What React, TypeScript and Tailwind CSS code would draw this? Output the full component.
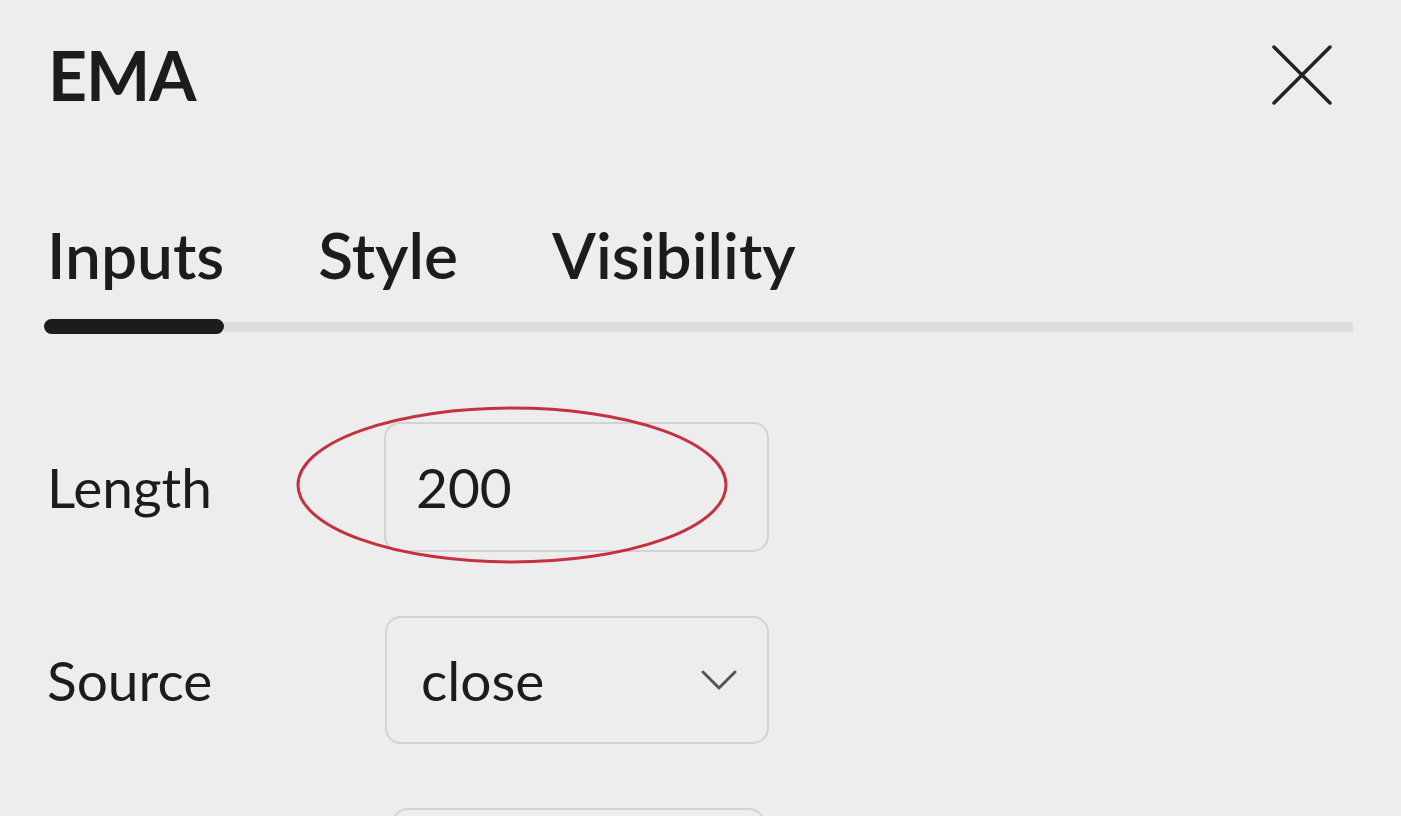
function Chevron() {
  return (
    <svg width="36" height="22" viewBox="0 0 36 22" fill="none">
      <path d="M2 3 L18 19 L34 3" stroke="#555" strokeWidth="3" strokeLinecap="round" strokeLinejoin="round" />
    </svg>
  );
}

function CloseIcon() {
  return (
    <svg width="60" height="60" viewBox="0 0 60 60" fill="none">
      <path d="M2 2 L58 58 M58 2 L2 58" stroke="#222" strokeWidth="3.5" strokeLinecap="round" />
    </svg>
  );
}

function Ellipse() {
  return (
    <svg
      className="absolute left-[-91px] top-[-19px] pointer-events-none"
      width="434"
      height="160"
      viewBox="0 0 434 160"
      fill="none"
    >
      <ellipse cx="217" cy="80" rx="214" ry="77" stroke="#c4323f" strokeWidth="3" />
    </svg>
  );
}

export default function App() {
  const tabs = ["Inputs", "Style", "Visibility"];

  return (
    <div
      className="h-screen w-full overflow-hidden bg-[#ededed] pl-[44px] pr-[48px] text-[#1c1c1c]"
      style={{ fontFamily: "Lato, 'Open Sans', sans-serif" }}
    >
      <div className="flex items-start justify-between pt-[41px]">
        <h1 className="pl-[4px] text-[68px] font-bold leading-none tracking-[-1px]">EMA</h1>
        <button className="mr-[21px] mt-[4px]">
          <CloseIcon />
        </button>
      </div>

      <div className="mt-[114px] flex gap-[94px] pl-[3px] text-[64px] font-semibold leading-none">
        {tabs.map((t) => (
          <span key={t}>{t}</span>
        ))}
      </div>

      <div className="mt-[32px] flex items-center">
        <div className="h-[15px] w-[180px] rounded-full bg-[#1c1c1c]" />
        <div className="h-[10px] flex-1 bg-[#dedede]" />
      </div>

      <div className="mt-[88px] flex flex-col gap-[64px]">
        <div className="flex items-center">
          <span className="w-[340px] pl-[3px] text-[55px] leading-none">Length</span>
          <div className="relative flex h-[130px] w-[385px] items-center rounded-[16px] border-2 border-[#d3d3d3] pl-[30px] text-[55px] leading-none">
            200
            <Ellipse />
          </div>
        </div>
        <div className="flex items-center">
          <span className="w-[341px] pl-[3px] text-[55px] leading-none">Source</span>
          <div className="flex h-[128px] w-[384px] items-center justify-between rounded-[16px] border-2 border-[#d3d3d3] pl-[34px] pr-[30px] text-[55px] leading-none">
            <span>close</span>
            <Chevron />
          </div>
        </div>
        <div className="flex items-center">
          <span className="w-[348px]" />
          <div className="h-[128px] w-[373px] rounded-[16px] border-2 border-[#d3d3d3]" />
        </div>
      </div>
    </div>
  );
}
